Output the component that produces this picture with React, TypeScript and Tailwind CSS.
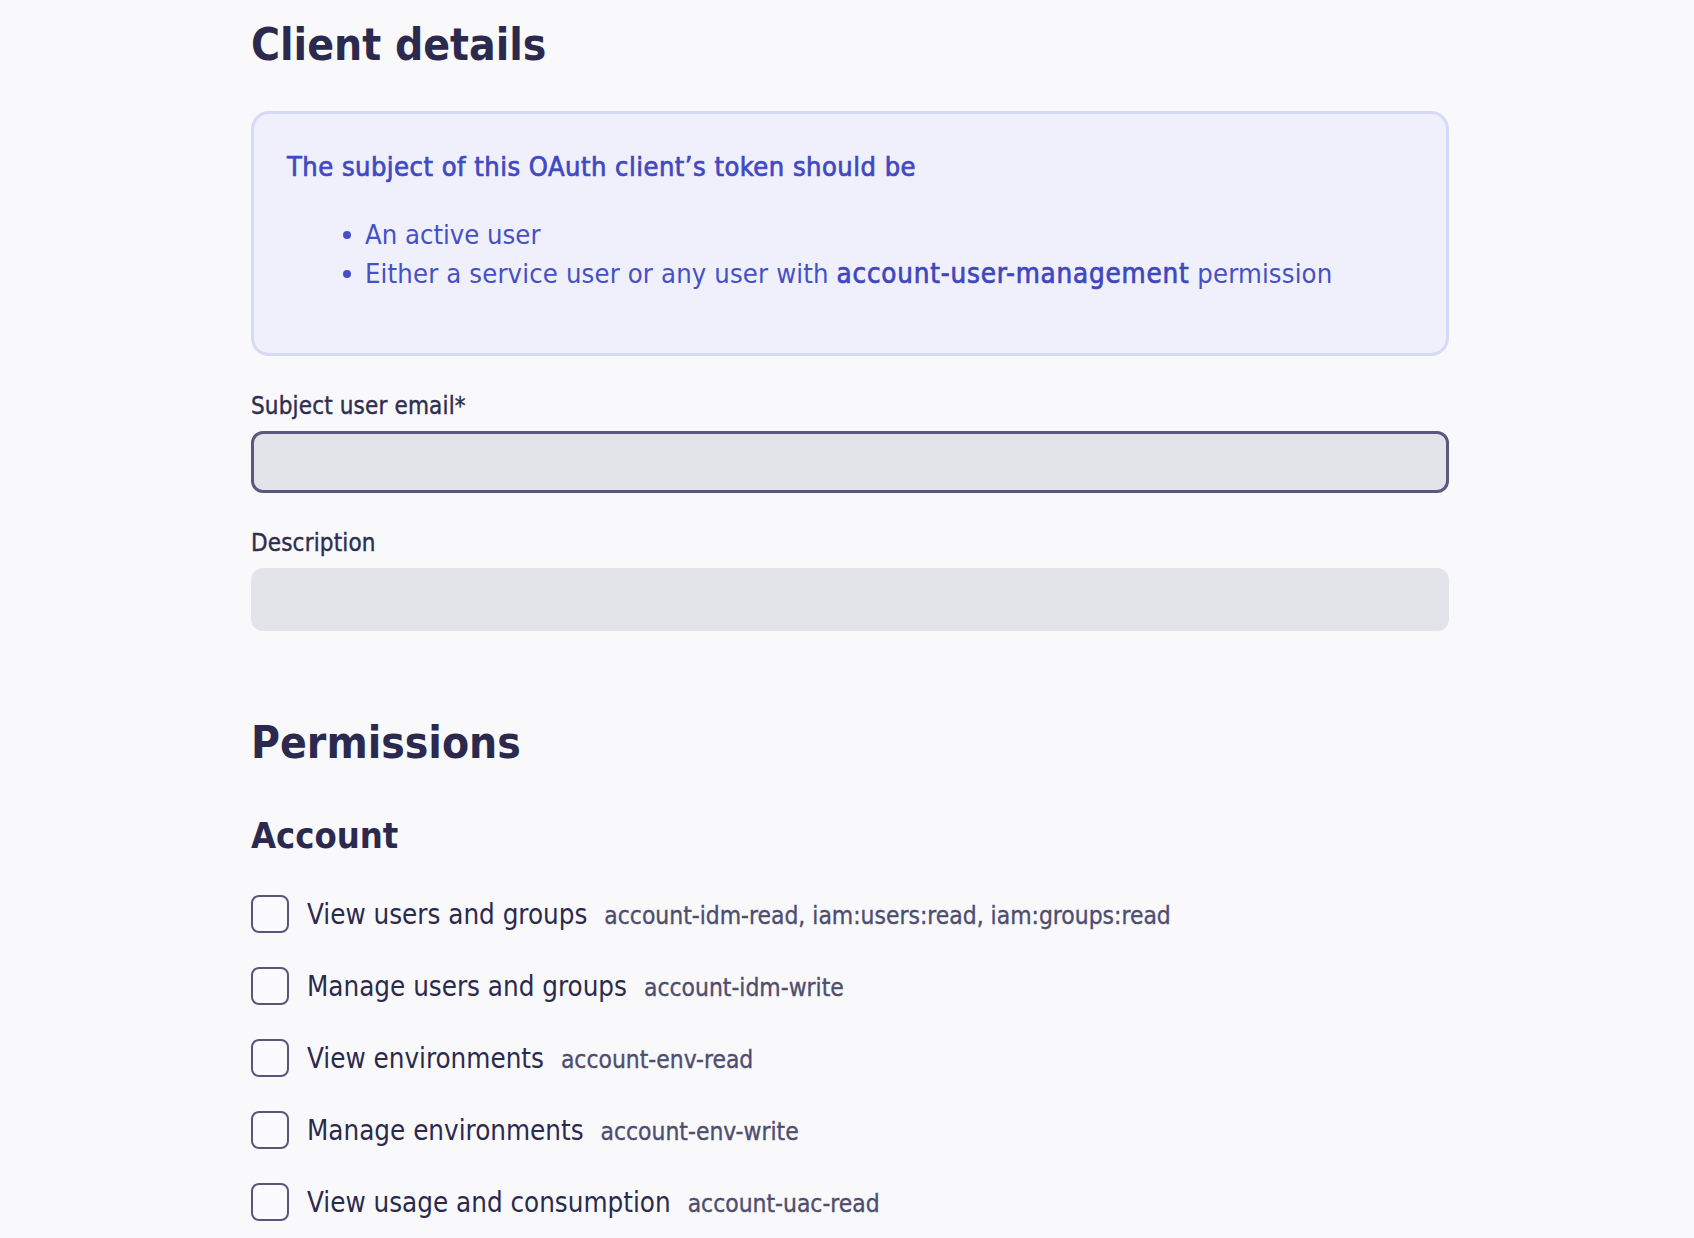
const perms = [
  { label: 'View users and groups', scopes: 'account-idm-read, iam:users:read, iam:groups:read' },
  { label: 'Manage users and groups', scopes: 'account-idm-write' },
  { label: 'View environments', scopes: 'account-env-read' },
  { label: 'Manage environments', scopes: 'account-env-write' },
  { label: 'View usage and consumption', scopes: 'account-uac-read' },
];

function Checkbox() {
  return <span className="h-[38px] w-[38px] shrink-0 rounded-[8px] border-2 border-[#57557b] bg-[#fbfbfd]" />;
}

function PermRow({ label, scopes }: { label: string; scopes: string }) {
  return (
    <label className="flex h-[72px] items-center">
      <Checkbox />
      <span className="ml-[18px] flex items-baseline">
        <span className="text-[27.5px] leading-[36px] text-[#2b2a4d]">{label}</span>
        <span className="ml-[17px] text-[24.4px] leading-[32px] text-[#4f4d70] [-webkit-text-stroke:0.35px_#4f4d70]">
          {scopes}
        </span>
      </span>
    </label>
  );
}

function Field({ label, active }: { label: string; active?: boolean }) {
  return (
    <div>
      <p className="text-[24px] leading-[32px] tracking-[0.15px] text-[#2f2e4f] [-webkit-text-stroke:0.4px_#2f2e4f]">
        {label}
      </p>
      <div
        className={
          active
            ? 'mt-[9px] h-[62px] rounded-[12px] border-[3px] border-[#5a587d] bg-[#e3e4ea]'
            : 'mt-[9px] h-[63px] rounded-[12px] bg-[#e3e4ea]'
        }
      />
    </div>
  );
}

export default function App() {
  return (
    <div className="min-h-screen bg-[#f9f9fb] font-['DejaVu_Sans_Condensed','DejaVu_Sans',sans-serif] [font-stretch:condensed]">
      <div className="ml-[251px] w-[1198px] pt-[19px]">
        <h1 className="text-[44px] font-bold leading-[52px] text-[#2b2a4e]">Client details</h1>

        <div className="mt-[40px] rounded-[18px] border-[3px] border-[#d6daf5] bg-[#eff0fb] pl-[33px] pr-6 pt-[35px] pb-[60px] text-[#4550c6]">
          <p className="text-[27px] leading-[36px] tracking-[0.5px] text-[#4148c3] [-webkit-text-stroke:0.7px_#4148c3]">
            The subject of this OAuth client’s token should be
          </p>
          <ul className="mt-[30px] pl-[56px]">
            <li className="flex items-center text-[27.2px] leading-[39px]">
              <span className="h-[8px] w-[8px] shrink-0 rounded-full bg-[#4550c6]" />
              <span className="ml-[14px]">An active user</span>
            </li>
            <li className="flex items-center text-[27.2px] leading-[39px] tracking-[0.15px]">
              <span className="h-[8px] w-[8px] shrink-0 rounded-full bg-[#4550c6]" />
              <span className="ml-[14px]">
                Either a service user or any user with{' '}
                <span className="text-[27.5px] tracking-[0.8px] text-[#3f46c0] [-webkit-text-stroke:0.7px_#3f46c0]">
                  account-user-management
                </span>{' '}
                permission
              </span>
            </li>
          </ul>
        </div>

        <div className="mt-[34px]">
          <Field label="Subject user email*" active />
        </div>
        <div className="mt-[34px]">
          <Field label="Description" />
        </div>

        <h2 className="mt-[86px] text-[44px] font-bold leading-[52px] text-[#2b2a4e]">Permissions</h2>
        <h3 className="mt-[45px] text-[36px] font-bold leading-[44px] text-[#2b2a4e]">Account</h3>

        <div className="mt-[20px] pb-10">
          {perms.map((p) => (
            <PermRow key={p.label} label={p.label} scopes={p.scopes} />
          ))}
        </div>
      </div>
    </div>
  );
}
